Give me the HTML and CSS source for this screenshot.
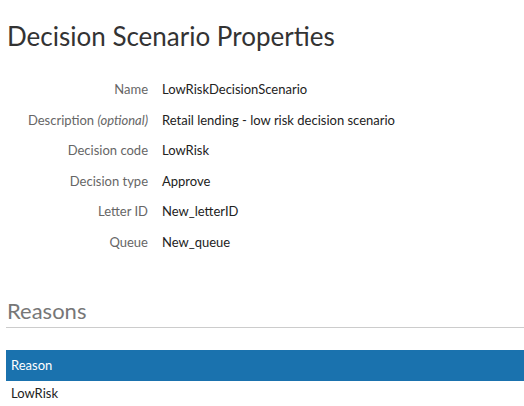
FILE: index.html
```html
<!DOCTYPE html>
<html>
<head>
<meta charset="utf-8">
<link rel="stylesheet" href="styles.css">
</head>
<body>
<div class="page">
  <h1 class="title">Decision Scenario Properties</h1>
  <div class="props">
    <div class="label">Name</div><div class="value">LowRiskDecisionScenario</div>
    <div class="label">Description <i>(optional)</i></div><div class="value">Retail lending - low risk decision scenario</div>
    <div class="label">Decision code</div><div class="value">LowRisk</div>
    <div class="label">Decision type</div><div class="value">Approve</div>
    <div class="label">Letter ID</div><div class="value">New_letterID</div>
    <div class="label">Queue</div><div class="value">New_queue</div>
  </div>
  <h2 class="section">Reasons</h2>
  <div class="table">
    <div class="thead">Reason</div>
    <div class="row">LowRisk</div>
  </div>
</div>
</body>
</html>
```
FILE: styles.css
```css
html, body {
  margin: 0;
  padding: 0;
  background: #fff;
}
body {
  font-family: Lato, "Open Sans", sans-serif;
  color: #333;
}
.page {
  padding: 0 0 0 6px;
}
.title {
  margin: 0;
  padding: 21px 0 0 1px;
  font-size: 26px;
  font-weight: 400;
  line-height: 30px;
  color: #333;
}
.props {
  display: grid;
  grid-template-columns: 142px auto;
  column-gap: 14px;
  row-gap: 0;
  margin-top: 23px;
  font-size: 13px;
  line-height: 30.6px;
}
.label {
  text-align: right;
  color: #666;
}
.label i {
  font-style: italic;
}
.value {
  color: #222;
}
.section {
  margin: 41px 0 0;
  padding: 0 0 4px 1px;
  font-size: 22px;
  font-weight: 400;
  line-height: 24px;
  color: #777;
  border-bottom: 1px solid #ccc;
}
.table {
  margin-top: 22px;
  font-size: 13px;
}
.thead {
  background: #1a72ae;
  color: #fff;
  height: 31px;
  line-height: 31px;
  padding-left: 5px;
}
.row {
  padding-left: 5px;
  line-height: 24px;
  color: #222;
}
```
